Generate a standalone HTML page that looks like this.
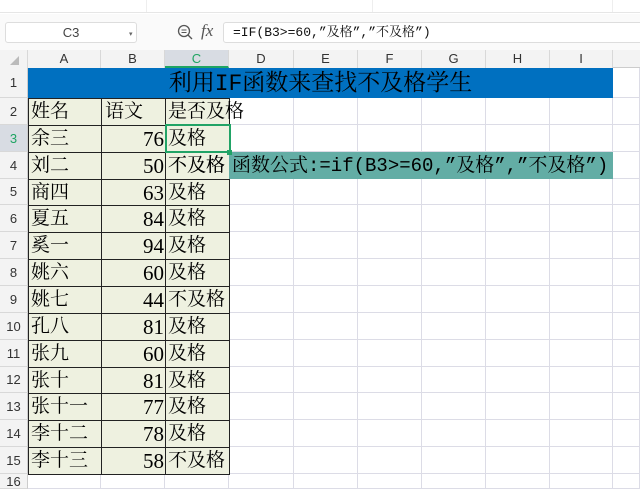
<!DOCTYPE html>
<html><head><meta charset="utf-8"><style>
*{margin:0;padding:0;box-sizing:border-box}
body{width:640px;height:489px;overflow:hidden;background:#fff;position:relative;font-family:"Liberation Mono","Noto Serif CJK SC",serif}
.a{position:absolute}
.hd{font-family:"Liberation Sans",sans-serif;font-size:13px;color:#333;text-align:center;background:#f3f3f3}
.t{font-size:19px;line-height:26px;white-space:nowrap;color:#000}
.n{font-family:"Liberation Serif",serif;font-size:21px}
</style></head><body>
<div class="a" style="left:0;top:0;width:640px;height:13px;border-bottom:1px solid #e6e6e6;background:#fff"></div>
<div class="a" style="left:146px;top:0;width:1px;height:12px;background:#eee"></div>
<div class="a" style="left:372px;top:0;width:1px;height:12px;background:#eee"></div>
<div class="a" style="left:612px;top:0;width:1px;height:12px;background:#eee"></div>
<div class="a" style="left:0;top:14px;width:640px;height:36px;background:#fafafa"></div>
<div class="a" style="left:5px;top:22px;width:132px;height:21px;border:1px solid #ddd;border-radius:3px;background:#fff;font:13px 'Liberation Sans',sans-serif;color:#444;text-align:center;line-height:19px">C3</div>
<div class="a" style="left:129px;top:30px;font-size:7px;color:#666">▾</div>
<svg class="a" style="left:177px;top:24px" width="16" height="16"><circle cx="7" cy="7" r="5.5" fill="none" stroke="#555" stroke-width="1.3"/><line x1="11" y1="11" x2="15" y2="15" stroke="#555" stroke-width="1.3"/><line x1="4.5" y1="6" x2="9.5" y2="6" stroke="#555"/><line x1="4.5" y1="8.5" x2="9.5" y2="8.5" stroke="#555"/></svg>
<div class="a" style="left:201px;top:21px;font:italic 17px 'Liberation Serif',serif;color:#555">fx</div>
<div class="a" style="left:223px;top:22px;width:420px;height:21px;border:1px solid #ddd;border-radius:3px 0 0 3px;background:#fff;font:13px 'Liberation Mono','Noto Serif CJK SC',monospace;line-height:19px;padding-left:9px;color:#111">=IF(B3&gt;=60,”及格”,”不及格”)</div>
<div id="g"></div>
<script>
var cols=[0,28,101,165,229,294,358,422,486,550,613,640],names=["","A","B","C","D","E","F","G","H","I",""];
var h='';
function rt(r){return r==1?68:Math.round(98+(r-2)*26.85);}
h+='<div class="a hd" style="left:0;top:50px;width:640px;height:18px;border-bottom:1px solid #ccc"></div>';
for(var i=0;i<10;i++){var x=cols[i],w=cols[i+1]-x;h+='<div class="a hd" style="left:'+x+'px;top:50px;width:'+w+'px;height:18px;line-height:18px;border-right:1px solid #d8d8d8;'+(i==3?'background:#d8dce3;color:#1fa463;border-bottom:2px solid #1fa463;':'')+'">'+names[i]+'</div>';}
h+='<div class="a" style="left:10px;top:56px;width:0;height:0;border-left:9px solid transparent;border-bottom:9px solid #bbb"></div>';
for(var r=1;r<=16;r++){var y=rt(r),y2=r==16?489:rt(r+1);
h+='<div class="a hd" style="left:0;top:'+y+'px;width:28px;height:'+(y2-y)+'px;line-height:'+(y2-y)+'px;border-bottom:1px solid #d8d8d8;border-right:1px solid #ccc;'+(r==3?'background:#d8dce3;color:#1fa463':'')+'">'+r+'</div>';
h+='<div class="a" style="left:28px;top:'+(y2-1)+'px;width:612px;height:1px;background:#dcdce6"></div>';}
for(var i=1;i<11;i++)h+='<div class="a" style="left:'+(cols[i+1]-1)+'px;top:68px;width:1px;height:421px;background:#dcdce6"></div>';
h+='<div class="a" style="left:28px;top:68px;width:585px;height:30px;background:#0070c0"></div>';
h+='<div class="a t" style="left:28px;top:69px;width:585px;text-align:center;font-size:23px;line-height:30px">利用IF函数来查找不及格学生</div>';
var d=[["姓名","语文","是否及格"],["余三",76],["刘二",50],["商四",63],["夏五",84],["奚一",94],["姚六",60],["姚七",44],["孔八",81],["张九",60],["张十",81],["张十一",77],["李十二",78],["李十三",58]];
for(var k=0;k<d.length;k++){var r=k+2,y=rt(r),y2=rt(r+1);
for(var c=1;c<=3;c++){var x=cols[c],w=cols[c+1]-x;h+='<div class="a" style="left:'+x+'px;top:'+y+'px;width:'+(w+1)+'px;height:'+(y2-y+1)+'px;background:#eef1e0;border:1px solid #222"></div>';}
var t3=k==0?d[k][2]:(d[k][1]>=60?"及格":"不及格");
h+='<div class="a t" style="left:31px;top:'+(y+1)+'px">'+d[k][0]+'</div>';
if(k==0)h+='<div class="a t" style="left:105px;top:'+(y+1)+'px">'+d[k][1]+'</div>';
else h+='<div class="a t n" style="left:101px;width:63px;text-align:right;top:'+(y+1)+'px">'+d[k][1]+'</div>';
h+='<div class="a t" style="left:168px;top:'+(y+1)+'px">'+t3+'</div>';}
var y4=rt(4);h+='<div class="a" style="left:229px;top:'+y4+'px;width:384px;height:27px;background:#63ada5"></div>';
h+='<div class="a t" style="left:232px;top:'+(y4+1)+'px">函数公式:=if(B3&gt;=60,”及格”,”不及格”)</div>';
var y3=rt(3);h+='<div class="a" style="left:165px;top:'+(y3-1)+'px;width:66px;height:29px;border:2px solid #21a366"></div><div class="a" style="left:227px;top:'+(y3+25)+'px;width:5px;height:5px;background:#21a366"></div>';
h+='<div class="a t" style="left:168px;top:'+(rt(4)+1)+'px">不及格</div>';
document.getElementById('g').innerHTML=h;
</script>
</body></html>
